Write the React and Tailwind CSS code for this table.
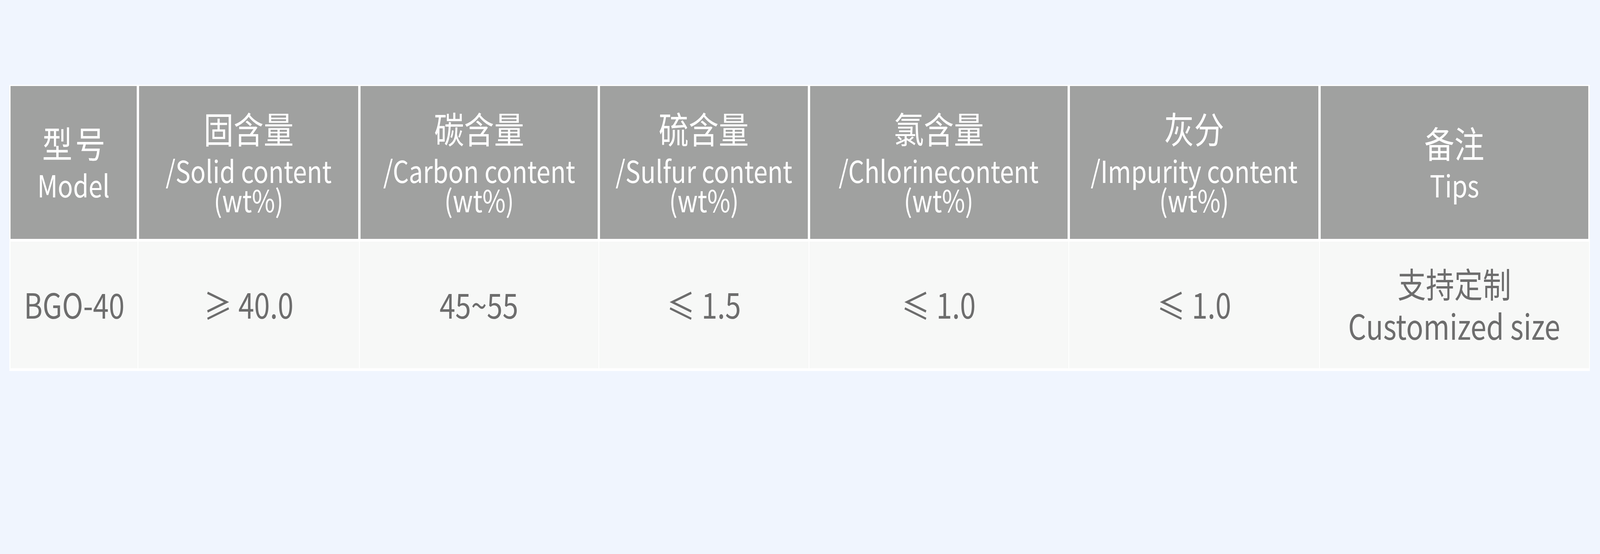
import React, { useEffect, useState } from "react";

const FONT = { fontFamily: '"Noto Sans CJK SC", "Noto Sans", sans-serif' };
const REF_WIDTH = 4961;

const headers = [
  { zh: "型号", en: ["Model"], cls: "mr-[3px]", zhCls: "tracking-[0.1em] pl-[0.1em]" },
  { zh: "固含量", en: ["/Solid content", "(wt%)"], cls: "ml-[3px] mr-[3px]", zhCls: "" },
  { zh: "碳含量", en: ["/Carbon content", "(wt%)"], cls: "ml-[3px] mr-[3px]", zhCls: "" },
  { zh: "硫含量", en: ["/Sulfur content", "(wt%)"], cls: "ml-[3px] mr-[3px]", zhCls: "" },
  { zh: "氯含量", en: ["/Chlorinecontent", "(wt%)"], cls: "ml-[3px] mr-[3px]", zhCls: "" },
  { zh: "灰分", en: ["/Impurity content", "(wt%)"], cls: "ml-[3px] mr-[3px]", zhCls: "" },
  { zh: "备注", en: ["Tips"], cls: "ml-[3px] mr-[2px]", zhCls: "" },
];

const body = [
  { lines: ["BGO-40"], cls: "mr-[1px]" },
  { lines: ["≥ 40.0"], cls: "ml-[1px] mr-[1px]" },
  { lines: ["45~55"], cls: "ml-[1px] mr-[1px]" },
  { lines: ["≤ 1.5"], cls: "ml-[1px] mr-[1px]" },
  { lines: ["≤ 1.0"], cls: "ml-[1px] mr-[1px]" },
  { lines: ["≤ 1.0"], cls: "ml-[1px] mr-[1px]" },
  { lines: ["支持定制", "Customized size"], cls: "ml-[1px]" },
];

function useScaleX() {
  const get = () =>
    typeof window === "undefined" ? 1 : Math.min(1, window.innerWidth / REF_WIDTH);
  const [sx, setSx] = useState(get);
  useEffect(() => {
    const on = () => setSx(get());
    window.addEventListener("resize", on);
    return () => window.removeEventListener("resize", on);
  }, []);
  return sx;
}

export default function App() {
  const sx = useScaleX();
  const t = { transform: `scaleX(${sx})` };
  return (
    <div className="w-full h-[1417px] bg-[#f0f5fe] pl-[0.5846%] pt-[217px] overflow-hidden" style={FONT}>
      <div className="w-[99.35%] bg-white pt-[3px] pl-[3px] pr-[2px] pb-[7px]">
        <div className="grid grid-cols-[395fr_686.5fr_742.5fr_651.5fr_805.5fr_777.5fr_835.5fr] h-[391px] mb-[7px]">
          {headers.map((h, i) => (
            <div
              key={i}
              className={`bg-[#a0a1a0] text-white flex flex-col items-center justify-center text-center pb-[28px] min-w-0 ${h.cls}`}
            >
              <div className={`text-[93px] leading-[140px] whitespace-nowrap ${h.zhCls}`} style={t}>
                {h.zh}
              </div>
              <div className="text-[78px] leading-[75px] whitespace-nowrap" style={t}>
                {h.en.map((s, j) => (
                  <React.Fragment key={j}>
                    {j > 0 && <br />}
                    {s}
                  </React.Fragment>
                ))}
              </div>
            </div>
          ))}
        </div>
        <div className="grid grid-cols-[395fr_686.5fr_742.5fr_651.5fr_805.5fr_777.5fr_835.5fr] h-[324px]">
          {body.map((b, i) => (
            <div
              key={i}
              className={`bg-[#f7f8f7] text-[#6d6d6d] flex flex-col items-center justify-center text-center pb-[7px] min-w-0 ${b.cls}`}
            >
              {b.lines.map((s, j) => (
                <div key={j} className="text-[88px] leading-[108px] whitespace-nowrap" style={t}>
                  {s}
                </div>
              ))}
            </div>
          ))}
        </div>
      </div>
    </div>
  );
}
